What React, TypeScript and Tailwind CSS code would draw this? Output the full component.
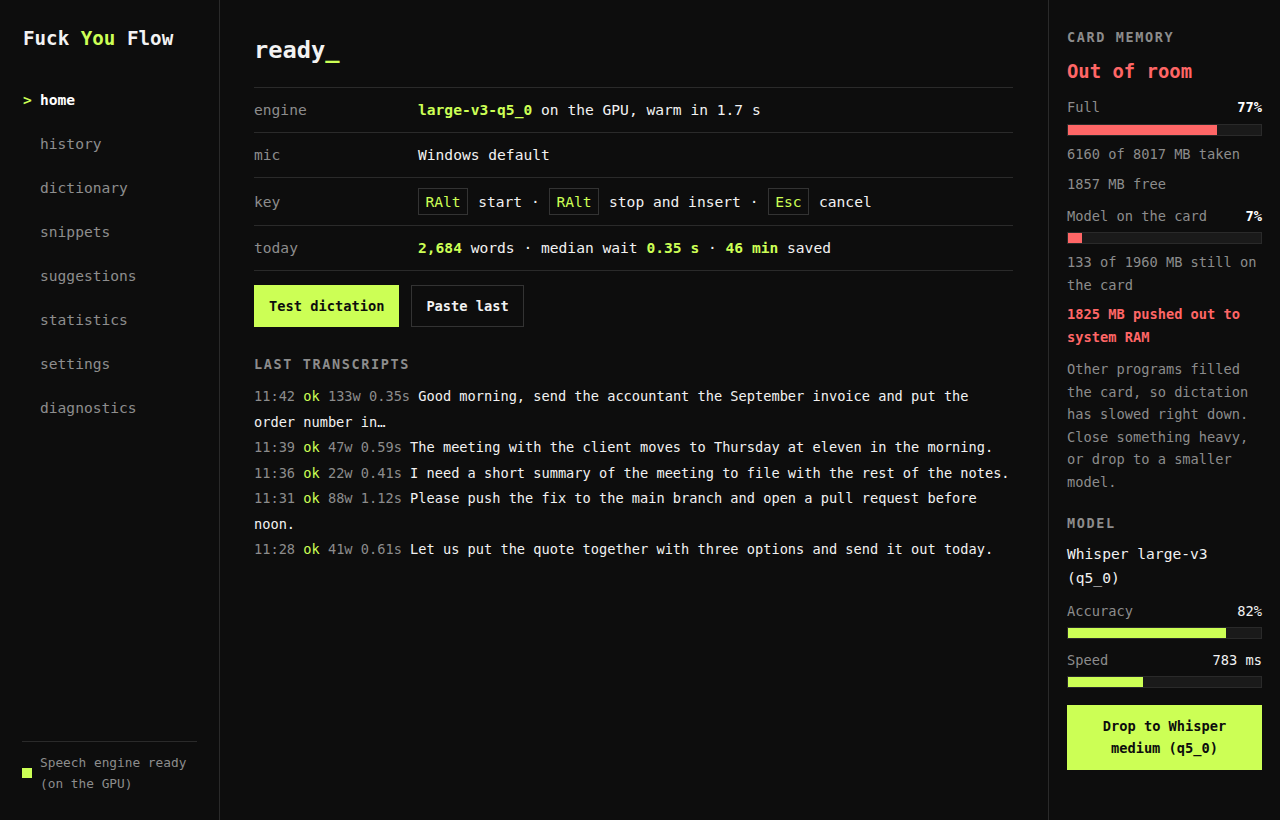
import type { ReactNode } from "react";

const mono = { fontFamily: '"DejaVu Sans Mono", "Liberation Mono", monospace' };

const navItems = [
  "home",
  "history",
  "dictionary",
  "snippets",
  "suggestions",
  "statistics",
  "settings",
  "diagnostics",
];

const transcripts = [
  {
    time: "11:42",
    words: "133w",
    wait: "0.35s",
    text: "Good morning, send the accountant the September invoice and put the order number in…",
  },
  {
    time: "11:39",
    words: "47w",
    wait: "0.59s",
    text: "The meeting with the client moves to Thursday at eleven in the morning.",
  },
  {
    time: "11:36",
    words: "22w",
    wait: "0.41s",
    text: "I need a short summary of the meeting to file with the rest of the notes.",
  },
  {
    time: "11:31",
    words: "88w",
    wait: "1.12s",
    text: "Please push the fix to the main branch and open a pull request before noon.",
  },
  {
    time: "11:28",
    words: "41w",
    wait: "0.61s",
    text: "Let us put the quote together with three options and send it out today.",
  },
];

const Kbd = ({ children }: { children: ReactNode }) => (
  <span className="mr-px flex h-[27px] items-center border border-[#333333] px-[6.5px] text-[#ccff55]">
    {children}
  </span>
);

const Hi = ({ children }: { children: ReactNode }) => (
  <span className="font-bold text-[#ccff55]">{children}</span>
);

const InfoRow = ({
  label,
  children,
  tall,
}: {
  label: string;
  children: ReactNode;
  tall?: boolean;
}) => (
  <div
    className={`flex items-center border-b border-[#2a2a2a] leading-[22px] ${
      tall ? "py-[10px]" : "py-[11px]"
    }`}
  >
    <div className="w-[164px] shrink-0 text-[#8c8c8c]">{label}</div>
    <div className="text-[#f2f2f2]">{children}</div>
  </div>
);

const Bar = ({ value, color }: { value: number; color: string }) => (
  <div className="h-[12px] border border-[#2a2a2a] bg-[#1a1a1a]">
    <div className="h-full" style={{ width: `${value}%`, backgroundColor: color }} />
  </div>
);

const SectionTitle = ({ children }: { children: ReactNode }) => (
  <div className="text-[13.5px] font-bold uppercase leading-[20px] tracking-[0.12em] text-[#8c8c8c]">
    {children}
  </div>
);

const Sidebar = () => (
  <aside className="flex h-[820px] w-[220px] shrink-0 flex-col border-r border-[#2a2a2a] px-[22px] pt-[25px] pb-[26px]">
    <div className="pl-px text-[19.2px] font-bold leading-[28px] text-[#f2f2f2]">
      Fuck <span className="text-[#ccff55]">You</span> Flow
    </div>

    <nav className="mt-[25px] text-[14.6px]">
      {navItems.map((item) => {
        const active = item === "home";
        return (
          <div key={item} className="flex leading-[44px]">
            <span className="w-[18px] pl-px font-bold text-[#ccff55]">{active ? ">" : ""}</span>
            <span className={active ? "font-bold text-white" : "text-[#8e8e8e]"}>{item}</span>
          </div>
        );
      })}
    </nav>

    <div className="mt-auto border-t border-[#2a2a2a] pt-[10px]">
      <div className="flex items-center">
        <span className="h-[10px] w-[10px] shrink-0 bg-[#ccff55]" />
        <span className="ml-[8px] text-[12.8px] leading-[21px] text-[#8c8c8c]">
          Speech engine ready
          <br />
          (on the GPU)
        </span>
      </div>
    </div>
  </aside>
);

const Main = () => (
  <main className="min-w-0 flex-1 pl-[34px] pr-[35px] pt-[30px]">
    <h1 className="text-[23.7px] font-bold leading-[40px] text-[#f2f2f2]">
      ready<span className="text-[#ccff55]">_</span>
    </h1>

    <div className="mt-[17px] border-t border-[#2a2a2a] text-[14.6px]">
      <InfoRow label="engine">
        <Hi>large-v3-q5_0</Hi> on the GPU, warm in 1.7 s
      </InfoRow>
      <InfoRow label="mic">Windows default</InfoRow>
      <InfoRow label="key" tall>
        <div className="flex items-center gap-[9px]">
          <Kbd>RAlt</Kbd>
          <span>start</span>
          <span>·</span>
          <Kbd>RAlt</Kbd>
          <span>stop and insert</span>
          <span>·</span>
          <Kbd>Esc</Kbd>
          <span>cancel</span>
        </div>
      </InfoRow>
      <InfoRow label="today">
        <Hi>2,684</Hi> words · median wait <Hi>0.35 s</Hi> · <Hi>46 min</Hi> saved
      </InfoRow>
    </div>

    <div className="mt-[14px] flex gap-[12px] text-[13.7px] font-bold">
      <button className="h-[42px] border border-[#ccff55] bg-[#ccff55] px-[14px] text-[#0d0d0d]">
        Test dictation
      </button>
      <button className="h-[42px] border border-[#333333] px-[14px] text-[#f2f2f2]">
        Paste last
      </button>
    </div>

    <div className="mt-[27px]">
      <SectionTitle>Last transcripts</SectionTitle>
    </div>

    <div className="mt-[10px] text-[13.65px] leading-[25.5px]">
      {transcripts.map((t) => (
        <div key={t.time}>
          <span className="text-[#8c8c8c]">{t.time}</span>{" "}
          <span className="text-[#ccff55]">ok</span>{" "}
          <span className="text-[#8c8c8c]">
            {t.words} {t.wait}
          </span>{" "}
          <span className="text-[#f2f2f2]">{t.text}</span>
        </div>
      ))}
    </div>
  </main>
);

const StatLine = ({
  label,
  value,
  bold,
}: {
  label: string;
  value: string;
  bold?: boolean;
}) => (
  <div className="flex justify-between leading-[22px]">
    <span className="text-[#8c8c8c]">{label}</span>
    <span className={bold ? "font-bold text-white" : "text-[#f2f2f2]"}>{value}</span>
  </div>
);

const MemoryPanel = () => (
  <aside className="h-[820px] w-[232px] shrink-0 border-l border-[#2a2a2a] pl-[18px] pr-[18px] pt-[27px] text-[13.7px]">
    <SectionTitle>Card memory</SectionTitle>
    <div className="mt-[11px] text-[18.9px] font-bold leading-[26px] text-[#ff6666]">
      Out of room
    </div>

    <div className="mt-[12px]">
      <StatLine label="Full" value="77%" bold />
    </div>
    <div className="mt-[6px]">
      <Bar value={77} color="#ff6666" />
    </div>
    <div className="mt-[7px] leading-[22px] text-[#8c8c8c]">6160 of 8017 MB taken</div>
    <div className="mt-[8px] leading-[22px] text-[#8c8c8c]">1857 MB free</div>

    <div className="mt-[10px]">
      <StatLine label="Model on the card" value="7%" bold />
    </div>
    <div className="mt-[5px]">
      <Bar value={7} color="#ff6666" />
    </div>
    <div className="mt-[7px] leading-[23px] text-[#8c8c8c]">133 of 1960 MB still on the card</div>
    <div className="mt-[6px] font-bold leading-[23px] text-[#ff6666]">
      1825 MB pushed out to system RAM
    </div>
    <div className="mt-[9px] leading-[22.6px] text-[#8c8c8c]">
      Other programs filled the card, so dictation has slowed right down. Close something
      heavy, or drop to a smaller model.
    </div>

    <div className="mt-[19px]">
      <SectionTitle>Model</SectionTitle>
    </div>
    <div className="mt-[9px] text-[14.6px] leading-[24px] text-[#f2f2f2]">
      Whisper large-v3 (q5_0)
    </div>

    <div className="mt-[10px]">
      <StatLine label="Accuracy" value="82%" />
    </div>
    <div className="mt-[5px]">
      <Bar value={82} color="#ccff55" />
    </div>
    <div className="mt-[10px]">
      <StatLine label="Speed" value="783 ms" />
    </div>
    <div className="mt-[5px]">
      <Bar value={39} color="#ccff55" />
    </div>

    <button className="mt-[17px] w-full bg-[#ccff55] px-[10px] py-[10.5px] text-center font-bold leading-[22px] text-[#0d0d0d]">
      Drop to Whisper medium (q5_0)
    </button>
  </aside>
);

export default function App() {
  return (
    <div className="flex h-[820px] w-full overflow-hidden bg-[#0d0d0d]" style={mono}>
      <Sidebar />
      <Main />
      <MemoryPanel />
    </div>
  );
}
